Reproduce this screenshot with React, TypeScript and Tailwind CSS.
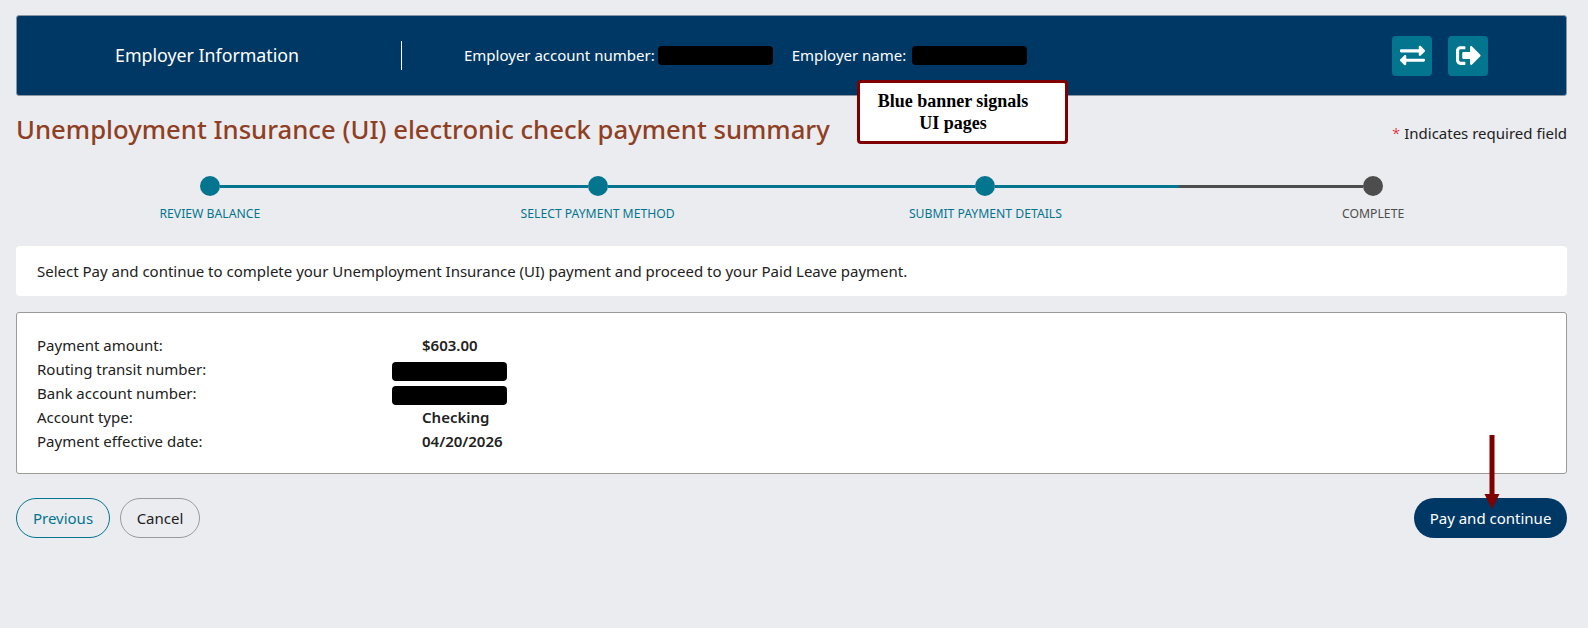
import { FaExchangeAlt, FaSignOutAlt } from "react-icons/fa";

const STEPS = [
  { label: "Review balance", done: true, left: "", right: "bg-[#04758f]" },
  { label: "Select payment method", done: true, left: "bg-[#04758f]", right: "bg-[#04758f]" },
  { label: "Submit payment details", done: true, left: "bg-[#04758f]", right: "bg-[#04758f]" },
  { label: "Complete", done: false, left: "bg-[#4d4d4d]", right: "" },
];

const ROWS = [
  { label: "Payment amount:", value: "$603.00" },
  { label: "Routing transit number:", redacted: true },
  { label: "Bank account number:", redacted: true },
  { label: "Account type:", value: "Checking" },
  { label: "Payment effective date:", value: "04/20/2026" },
];

function Redacted({ width }: { width: string }) {
  return <span className={"inline-block h-[19px] rounded-[4px] bg-black " + width} />;
}

function Banner() {
  return (
    <div className="relative flex h-[81px] items-center rounded-[3px] border border-[#8a97a3] bg-[#003865] text-white">
      <div className="w-[384px] pl-[98px] text-[17.8px]">Employer Information</div>
      <div className="h-[29px] w-px bg-white" />
      <div className="ml-[62px] flex items-center text-[15px]">
        <span>Employer account number:</span>
        <Redacted width="w-[115px] ml-[3px]" />
        <span className="ml-[19px]">Employer name:</span>
        <Redacted width="w-[115px] ml-[6px]" />
      </div>
      <div className="ml-auto mr-[78px] flex gap-4">
        <button className="flex h-10 w-10 items-center justify-center rounded-[4px] bg-[#04758f] text-[25px]">
          <FaExchangeAlt />
        </button>
        <button className="flex h-10 w-10 items-center justify-center rounded-[4px] bg-[#04758f] text-[25px]">
          <FaSignOutAlt />
        </button>
      </div>
      <div className="absolute left-[840px] top-[64px] z-10 h-[64px] w-[211px] rounded-[4px] border-[3px] border-[#7f0000] bg-white pl-[7px] pt-[7px] text-center font-['Liberation_Serif',serif] text-[18px] leading-[22px] font-bold text-black">
        <div className="w-[172px]">
          <div>Blue banner signals</div>
          <div>UI pages</div>
        </div>
      </div>
    </div>
  );
}

function Stepper() {
  return (
    <div className="mt-[27px] grid grid-cols-4">
      {STEPS.map((s) => (
        <div key={s.label} className="flex flex-col items-center">
          <div className="flex w-full items-center">
            <div className={"h-[3px] flex-1 " + s.left} />
            <div className={"h-5 w-5 rounded-full " + (s.done ? "bg-[#04758f]" : "bg-[#4d4d4d]")} />
            <div className={"h-[3px] flex-1 " + s.right} />
          </div>
          <div className={"mt-[10px] text-[12.2px] leading-[16px] uppercase " + (s.done ? "text-[#04758f]" : "text-[#4d4d4d]")}>
            {s.label}
          </div>
        </div>
      ))}
    </div>
  );
}

export default function App() {
  return (
    <div className="min-h-[628px] bg-[#ebecf0] pl-4 pr-[21px] pt-[15px] font-['Noto_Sans',sans-serif] text-[#212121]">
      <Banner />

      <div className="mt-[15px] flex items-end justify-between">
        <h1 className="text-[25.7px] leading-[38px] font-medium text-[#8f3f24]">
          Unemployment Insurance (UI) electronic check payment summary
        </h1>
        <div className="mb-[5px] text-[15px] leading-[22px]">
          <span className="font-light text-red-600">*</span> Indicates required field
        </div>
      </div>

      <Stepper />

      <div className="mt-[24px] flex h-[50px] items-center rounded-[4px] bg-white pl-[21px] text-[15px]">
        Select Pay and continue to complete your Unemployment Insurance (UI) payment and proceed to your Paid Leave payment.
      </div>

      <div className="mt-4 h-[162px] rounded-[3px] border border-[#9a9a9a] bg-white pl-5 pt-5 text-[15px] leading-[24px]">
        {ROWS.map((r) => (
          <div key={r.label} className="flex h-6 items-center">
            <div className="w-[355px]">{r.label}</div>
            {r.redacted ? (
              <Redacted width="w-[115px] mt-[4px]" />
            ) : (
              <div className="pl-[30px] font-semibold">{r.value}</div>
            )}
          </div>
        ))}
      </div>

      <div className="relative mt-[24px] flex items-center gap-[10px] text-[15px]">
        <button className="h-10 w-[94px] rounded-full border border-[#04758f] text-[#04758f]">Previous</button>
        <button className="h-10 w-[80px] rounded-full border border-[#9a9a9a]">Cancel</button>
        <button className="ml-auto h-10 w-[153px] rounded-full bg-[#003865] text-white">Pay and continue</button>
        <svg className="absolute right-[67px] -top-[63px]" width="16" height="75" viewBox="0 0 16 75">
          <path d="M5.5 0h5v59h5L8 74 .5 59h5z" fill="#7f0000" />
        </svg>
      </div>
    </div>
  );
}
